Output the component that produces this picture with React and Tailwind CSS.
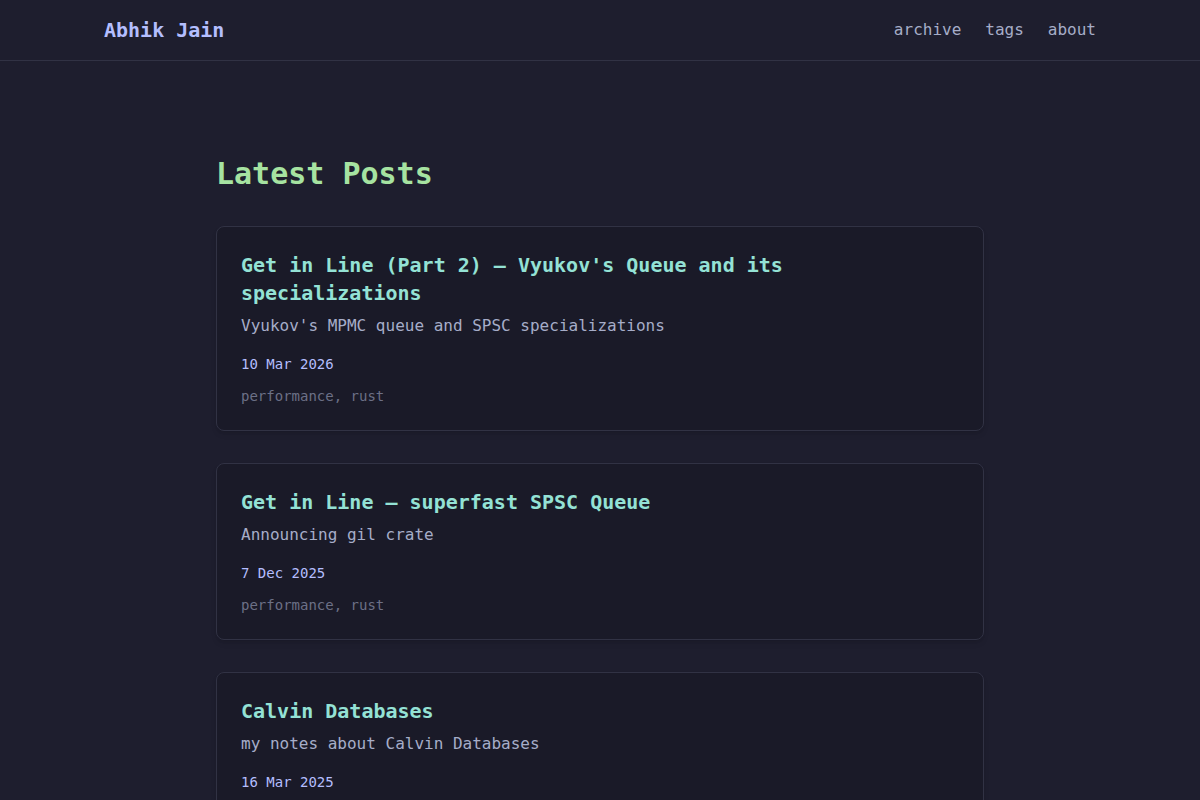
export default function App() {
  const posts = [
    {
      title: "Get in Line (Part 2) – Vyukov's Queue and its specializations",
      desc: "Vyukov's MPMC queue and SPSC specializations",
      date: "10 Mar 2026",
      tags: "performance, rust",
    },
    {
      title: "Get in Line – superfast SPSC Queue",
      desc: "Announcing gil crate",
      date: "7 Dec 2025",
      tags: "performance, rust",
    },
    {
      title: "Calvin Databases",
      desc: "my notes about Calvin Databases",
      date: "16 Mar 2025",
      tags: "databases",
    },
  ];
  return (
    <div
      className="min-h-screen bg-[#1e1e2e] text-[#cdd6f4]"
      style={{ fontFamily: '"DejaVu Sans Mono", "Liberation Mono", monospace' }}
    >
      <header className="border-b border-[#313244]">
        <div className="mx-auto flex h-[60px] max-w-[1024px] items-center justify-between px-4">
          <a className="text-[20px] font-bold leading-7 text-[#b4befe]">Abhik Jain</a>
          <nav className="flex gap-6 text-[16px] text-[#a6adc8]">
            <a>archive</a>
            <a>tags</a>
            <a>about</a>
          </nav>
        </div>
      </header>
      <main className="mx-auto max-w-[768px] pt-[95px]">
        <h1 className="mb-[34px] text-[30px] font-bold leading-9 text-[#a6e3a1]">Latest Posts</h1>
        <div className="flex flex-col gap-[32px]">
          {posts.map((p) => (
            <article
              key={p.title}
              className="rounded-lg border border-[#313244] bg-[#1a1a28] px-6 pt-[24px] pb-6 shadow-md"
            >
              <h2 className="text-[20px] font-bold leading-7 text-[#94e2d5]">{p.title}</h2>
              <p className="mt-[7px] text-[16px] leading-6 text-[#a6adc8]">{p.desc}</p>
              <div className="mt-4 text-[14px] leading-5 text-[#b4befe]">{p.date}</div>
              <div className="mt-3 text-[14px] leading-5 text-[#6c7086]">{p.tags}</div>
            </article>
          ))}
        </div>
      </main>
    </div>
  );
}
